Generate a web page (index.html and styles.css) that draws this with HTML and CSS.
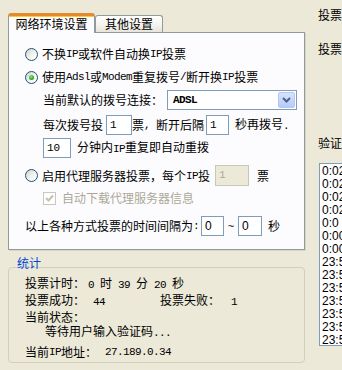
FILE: index.html
```html
<!DOCTYPE html>
<html lang="zh-CN">
<head>
  <meta charset="UTF-8" />
  <title>投票设置</title>
  <link rel="stylesheet" href="styles.css">
</head>
<body>
<div class="app">
  <div class="left">
    <!-- tabs -->
    <div class="tabs">
      <div class="tab active">网络环境设置</div>
      <div class="tab">其他设置</div>
    </div>

    <div class="panel">
      <div class="row">
        <span class="radio"></span>不换<span class="en">IP</span>或软件自动换<span class="en">IP</span>投票
      </div>
      <div class="row gap3">
        <span class="radio on"></span>使用<span class="en">Adsl</span>或<span class="en">Modem</span>重复拨号<span class="en">/</span>断开换<span class="en">IP</span>投票
      </div>
      <div class="row gap3 sub">
        当前默认的拨号连接：
        <div class="select">
          <span class="en bold">ADSL</span>
          <span class="drop">
            <svg width="9" height="6" viewBox="0 0 9 6"><path d="M1 1 L4.5 4.5 L8 1" fill="none" stroke="#4d6185" stroke-width="2"/></svg>
          </span>
        </div>
      </div>
      <div class="row gap5 sub">
        每次拨号投<span class="input w26 ml3">1</span>票<span class="en">,&nbsp;</span>断开后隔<span class="input w23 ml2">1</span><span class="ml6">秒再拨号<span class="en">.</span></span>
      </div>
      <div class="row gap3 sub">
        <span class="input w28">10</span><span class="ml6">分钟内<span class="en">IP</span>重复即自动重拨</span>
      </div>
      <div class="row gap7 tall">
        <span class="radio"></span>启用代理服务器投票，每个<span class="en">IP</span>投<span class="input w34 ml5 disabled">1</span><span class="ml8">票</span>
      </div>
      <div class="row gap2 sub muted">
        <span class="check">
          <svg width="9" height="9" viewBox="0 0 9 9"><path d="M1 4 L3.5 6.5 L8 1.5" fill="none" stroke="#c5c2b2" stroke-width="2"/></svg>
        </span>自动下载代理服务器信息
      </div>
      <div class="row gap8">
        以上各种方式投票的时间间隔为<span class="en">:</span><span class="input w23 ml2 sans">0</span><span class="tilde">~</span><span class="input w24 sans">0</span><span class="ml6">秒</span>
      </div>
    </div>

    <!-- statistics -->
    <div class="stats-title">统计</div>
    <div class="stats">
      <div class="srow">投票计时：<span class="val"><span class="en">0 </span>时<span class="en"> 39 </span>分<span class="en"> 20 </span>秒</span></div>
      <div class="srow gap3">
        <span class="cell">投票成功：<span class="en val2">44</span></span>
        <span>投票失败：<span class="en val3">1</span></span>
      </div>
      <div class="status">
        <div>当前状态：</div>
        <div class="indent">等待用户输入验证码<span class="en">...</span></div>
      </div>
      <div class="srow gap5">当前<span class="en">IP</span>地址：<span class="en val4">27.189.0.34</span></div>
    </div>
  </div>

  <div class="right">
    <div class="rlabel first">投票</div>
    <div class="rlabel second">投票</div>
    <div class="rlabel third">验证</div>
    <div class="log">
      <div>0:02:13</div>
      <div>0:02:01</div>
      <div>0:02:00</div>
      <div>0:02:00</div>
      <div>0:0 1:59</div>
      <div>0:00:58</div>
      <div>0:00:13</div>
      <div>23:59:57</div>
      <div>23:59:41</div>
      <div>23:59:40</div>
      <div>23:59:32</div>
      <div>23:59:20</div>
      <div>23:59:19</div>
      <div>23:59:06</div>
    </div>
  </div>
</div>
</body>
</html>
```

FILE: styles.css
```css
/* Reset */
html, body {
  margin: 0;
  padding: 0;
}

body {
  width: 342px;
  height: 370px;
  overflow: hidden;
  background: #ece9d8;
  color: #000;
  font-family: "Noto Sans CJK SC", "Noto Sans", sans-serif;
  font-size: 12px;
  line-height: 14px;
}

/* half width latin, like SimSun's ascii */
.en {
  font-family: "Liberation Mono", monospace;
  font-size: 11px;
  letter-spacing: -0.6px;
  white-space: pre;
}
.bold {
  font-weight: bold;
}

.app {
  display: flex;
}

.left {
  width: 297px;
  margin-left: 8px;
  flex: none;
}

/* Tabs */
.tabs {
  display: flex;
  align-items: flex-end;
  height: 19px;
  padding-top: 13px;
}
.tab {
  box-sizing: border-box;
  height: 17px;
  width: 68px;
  border: 1px solid #919b9c;
  border-bottom: none;
  border-radius: 3px 3px 0 0;
  background: linear-gradient(#ffffff, #f3f2ec 60%, #e6e4da);
  text-align: center;
  line-height: 16px;
}
.tab.active {
  position: relative;
  z-index: 1;
  width: 87px;
  height: 20px;
  margin-bottom: -1px;
  border-top: 3px solid #e68b2c;
  background: #fcfcfe;
  line-height: 16px;
  box-shadow: inset 0 1px 0 #ffc73c;
}

/* Tab page */
.panel {
  box-sizing: border-box;
  height: 218px;
  width: 297px;
  border: 1px solid #919b9c;
  background: #fcfcfe;
  box-shadow: 1px 1px 0 #d8d5c8;
  padding: 11px 0 0 16px;
}

.row {
  display: flex;
  align-items: center;
  height: 20px;
  white-space: nowrap;
}
.row.tall {
  height: 21px;
}
.sub {
  padding-left: 18px;
}
.muted {
  color: #aca899;
}

.gap2 { margin-top: 2px; }
.gap3 { margin-top: 3px; }
.gap5 { margin-top: 5px; }
.gap7 { margin-top: 7px; }
.gap8 { margin-top: 8px; }
.ml2 { margin-left: 2px; }
.ml3 { margin-left: 3px; }
.ml5 { margin-left: 5px; }
.ml6 { margin-left: 6px; }
.ml8 { margin-left: 8px; }

/* XP radio */
.radio {
  box-sizing: border-box;
  width: 13px;
  height: 13px;
  margin-right: 4px;
  border: 1px solid #1c5180;
  border-radius: 50%;
  background: linear-gradient(135deg, #d4d1c4, #f4f3ee 55%, #ffffff);
  display: flex;
  align-items: center;
  justify-content: center;
  flex: none;
}
.radio.on::after {
  content: "";
  width: 5px;
  height: 5px;
  border-radius: 50%;
  background: radial-gradient(circle at 40% 35%, #8ee27b, #21a121 70%);
}

/* disabled checkbox */
.check {
  box-sizing: border-box;
  width: 13px;
  height: 13px;
  margin-right: 6px;
  border: 1px solid #cac8bb;
  background: #fff;
  display: flex;
  align-items: center;
  justify-content: center;
  flex: none;
}

/* text boxes */
.input {
  box-sizing: border-box;
  height: 20px;
  border: 1px solid #7f9db9;
  background: #fff;
  padding-left: 3px;
  font-family: "Liberation Mono", monospace;
  font-size: 11px;
  line-height: 18px;
  flex: none;
}
.input.sans {
  font-family: "Liberation Sans", sans-serif;
  font-size: 12px;
}
.input.disabled {
  height: 21px;
  border-color: #c9c7ba;
  background: #ece9d8;
  color: #aca899;
  line-height: 19px;
}
.w23 { width: 23px; }
.w24 { width: 24px; }
.w26 { width: 26px; }
.w28 { width: 28px; }
.w34 { width: 34px; }

.tilde {
  width: 14px;
  text-align: center;
  font-family: "Liberation Sans", sans-serif;
  font-size: 11px;
}

/* combo box */
.select {
  box-sizing: border-box;
  display: flex;
  align-items: center;
  justify-content: space-between;
  width: 130px;
  height: 20px;
  margin-left: 4px;
  border: 1px solid #7f9db9;
  background: #fff;
  padding: 0 1px 0 5px;
}
.drop {
  box-sizing: border-box;
  width: 17px;
  height: 16px;
  border: 1px solid #b3c8f5;
  border-radius: 2px;
  background: linear-gradient(#d6e3fe, #b5cbf7);
  display: flex;
  align-items: center;
  justify-content: center;
}

/* statistics group */
.stats-title {
  margin-top: 6px;
  height: 11px;
  padding-left: 9px;
  color: #0046d5;
  line-height: 14px;
}
.stats {
  box-sizing: border-box;
  height: 96px;
  width: 297px;
  border: 1px solid #d0d0bf;
  border-radius: 4px;
  padding: 8px 0 0 16px;
}
.srow {
  display: flex;
  height: 14px;
  white-space: nowrap;
}
.cell {
  width: 135px;
}
.val {
  margin-left: 3px;
}
.val2 {
  margin-left: 8px;
}
.val3 {
  margin-left: 11px;
}
.val4 {
  margin-left: 8px;
}
.status {
  margin-top: 3px;
  line-height: 14px;
}
.indent {
  padding-left: 20px;
}

/* right column, cut by the window edge */
.right {
  flex: none;
  width: 120px;
  margin-left: 13px;
}
.rlabel {
  height: 14px;
}
.rlabel.first { margin-top: 8px; }
.rlabel.second { margin-top: 20px; }
.rlabel.third { margin-top: 80px; }

.log {
  box-sizing: border-box;
  margin-top: 13px;
  margin-left: 1px;
  height: 183px;
  border: 1px solid #7f9db9;
  background: #fff;
  padding: 1px 0 0 2px;
  font-family: "Liberation Sans", sans-serif;
  font-size: 12px;
  line-height: 13px;
}
```
